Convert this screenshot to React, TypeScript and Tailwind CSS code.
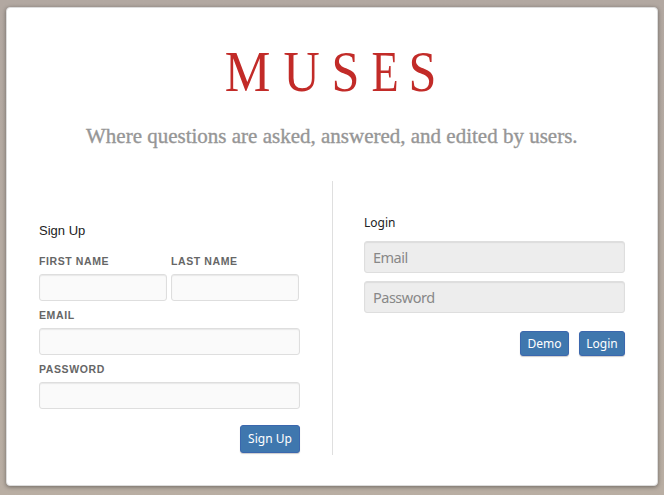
import React from "react";

const letters = [
  { ch: "M", x: 224.8, s: 0.9 },
  { ch: "U", x: 283.5, s: 0.88 },
  { ch: "S", x: 331.5, s: 0.88 },
  { ch: "E", x: 371.5, s: 0.78 },
  { ch: "S", x: 408.6, s: 0.88 },
];

function Logo() {
  return (
    <svg width="230" height="68" viewBox="220 38 230 68" role="img" aria-label="Muses" className="block overflow-visible" fill="#c22b28">
      {letters.map((l, i) => (
        <text key={i} transform={`translate(${l.x} 91) scale(${l.s} 1)`} fontFamily="Liberation Serif, serif" fontSize="57">
          {l.ch}
        </text>
      ))}
    </svg>
  );
}

function Field({ label, type = "text", className = "" }: { label: string; type?: string; className?: string }) {
  return (
    <label className={`block h-[54px] ${className}`}>
      <span className="block h-5 text-[10.5px] leading-[14px] font-bold tracking-[0.6px] text-[#666] uppercase">{label}</span>
      <input type={type} className="block h-[27px] w-full rounded-[3px] border border-[#dedede] bg-[#fafafa] px-2 shadow-[inset_0_1px_1px_#e8e8e8] outline-none" />
    </label>
  );
}

function Button({ children, className }: { children: React.ReactNode; className: string }) {
  return (
    <button className={`flex items-center justify-center rounded-[3px] border border-[#3b67ae] bg-[#3f77ae] font-['Noto_Sans',sans-serif] text-white shadow-[0_1px_1px_rgba(0,0,0,0.2)] ${className}`}>
      {children}
    </button>
  );
}

const loginInput =
  "block h-8 w-full rounded-[3px] border border-[#dedede] bg-[#ededed] px-2 font-['Noto_Sans',sans-serif] text-[14.5px] tracking-[-0.5px] text-[#888] shadow-[inset_0_1px_1px_#dcdcdc] outline-none placeholder:text-[#888] placeholder:opacity-100";

export default function App() {
  return (
    <main className="h-[495px] w-[664px] overflow-hidden bg-linear-to-b from-[#b2a8a1] to-[#b9aea3] px-[6px] pt-[7px] font-['Liberation_Sans',sans-serif]">
      <section className="h-[479px] w-[652px] rounded-[4px] border border-[#dcdcdc] bg-white shadow-[0_1px_4px_rgba(0,0,0,0.4)]">
        <header className="flex h-[173px] flex-col pt-[30px]">
          <div className="ml-[213px]">
            <Logo />
          </div>
          <p className="mt-[16px] ml-[79px] font-['Liberation_Serif',serif] text-[21px] leading-7 whitespace-nowrap text-[#969696] [-webkit-text-stroke:0.35px_#969696]">
            Where questions are asked, answered, and edited by users.
          </p>
        </header>
        <div className="flex h-[274px]">
          <form className="w-[326px] border-r border-[#dfdfdf] pt-[42px] pl-8" onSubmit={(e) => e.preventDefault()}>
            <h2 className="h-[31px] text-[13px] leading-4 text-[#222]">Sign Up</h2>
            <div className="flex gap-1">
              <Field label="First Name" className="w-32" />
              <Field label="Last Name" className="w-32" />
            </div>
            <Field label="Email" className="w-[261px]" />
            <Field label="Password" type="password" className="w-[261px]" />
            <div className="mt-[9px] flex w-[261px] justify-end">
              <Button className="h-7 w-[60px] text-[12px]">Sign Up</Button>
            </div>
          </form>
          <form className="ml-[31px] w-[261px] pt-[34px]" onSubmit={(e) => e.preventDefault()}>
            <h2 className="h-[26px] font-['Noto_Sans',sans-serif] text-[12px] leading-4 text-[#222]">Login</h2>
            <input className={loginInput} placeholder="Email" />
            <input className={`${loginInput} mt-2`} placeholder="Password" />
            <div className="mt-[18px] flex justify-end gap-[10px]">
              <Button className="h-[25px] w-[49px] text-[12px]">Demo</Button>
              <Button className="h-[25px] w-[46px] text-[12px]">Login</Button>
            </div>
          </form>
        </div>
      </section>
    </main>
  );
}
